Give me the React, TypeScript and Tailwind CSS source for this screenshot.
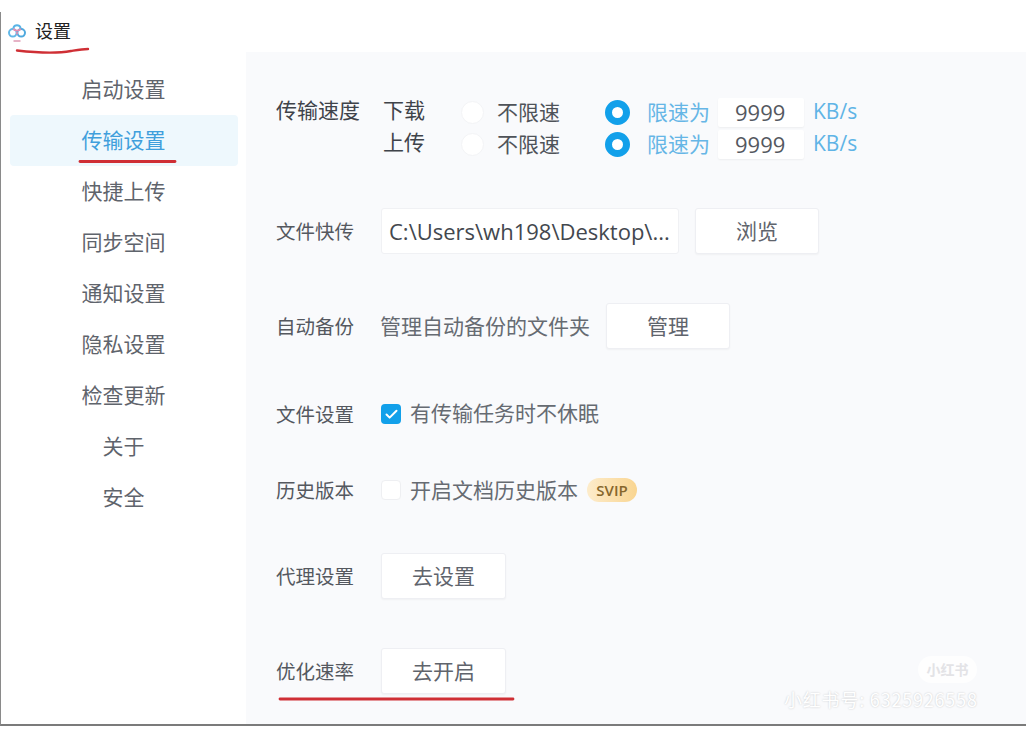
import React from 'react';
import { Check } from 'lucide-react';

const FONT = "font-['Noto_Sans_CJK_SC','Noto_Sans',sans-serif]";

const navItems = ['启动设置', '传输设置', '快捷上传', '同步空间', '通知设置', '隐私设置', '检查更新', '关于', '安全'];

const Logo = () => (
  <svg width="20" height="24" viewBox="0 0 20 24" fill="none">
    <circle cx="4.8" cy="14.8" r="3.8" stroke="#62b8e8" strokeWidth="2" />
    <circle cx="13.2" cy="14.8" r="3.8" stroke="#4fa9de" strokeWidth="2" />
    <path d="M5.3 10a3.9 3.9 0 0 1 7.4 0" stroke="#58b4e6" strokeWidth="2" />
    <path d="M5.4 10.6c1 2.6 6.2 2.6 7.2 0" stroke="#e88db0" strokeWidth="1.8" />
    <path d="M9 14v2.4" stroke="#e88db0" strokeWidth="1.6" />
    <path d="M5.5 23h7" stroke="#d98aa8" strokeWidth="1.3" />
  </svg>
);

const Radio = ({ on }: { on?: boolean }) =>
  on ? (
    <span className="block w-[25px] h-[25px] rounded-full border-[7px] border-[#12a0ea] bg-white" />
  ) : (
    <span className="block w-[23px] h-[23px] rounded-full bg-white border border-[#f3f4f6]" />
  );

const Btn = ({ label, width }: { label: string; width: string }) => (
  <button className={`${width} h-[46px] pb-[2px] bg-white border border-[#eeeff3] rounded-[3px] text-[21px] leading-[40px] text-[#5f646c] shadow-[0_1px_2px_rgba(0,0,0,0.04)]`}>
    {label}
  </button>
);

const Label = ({ text }: { text: string }) => (
  <span className="w-[105px] shrink-0 text-[19.5px] text-[#54585f]">{text}</span>
);

const SpeedRow = ({ label }: { label: string }) => (
  <div className="flex items-center h-[32px]">
    <span className="w-[77px] text-[21px] text-[#3f434a] -translate-y-[3px]">{label}</span>
    <span className="w-[24px] flex justify-center">
      <Radio />
    </span>
    <span className="ml-[13px] w-[108px] text-[21px] text-[#4f5359] -translate-y-[1px]">不限速</span>
    <Radio on />
    <span className="ml-[17px] w-[71px] text-[21px] text-[#66b6e6] -translate-y-[1px]">限速为</span>
    <span className="w-[86px] h-[29px] bg-white rounded-[2px] text-[22px] leading-[29px] text-[#54585f] font-['Open_Sans',sans-serif] pl-[17px] overflow-hidden shadow-[0_1px_2px_rgba(0,0,0,0.05)]">
      9999
    </span>
    <span className="ml-[9px] text-[21px] text-[#5fb4e6] font-['Open_Sans',sans-serif] -translate-y-[1px]">KB/s</span>
  </div>
);

export default function App() {
  return (
    <div className={`relative w-[1026px] h-[742px] bg-white flex flex-col overflow-hidden ${FONT}`}>
      {/* title bar */}
      <div className="mt-[12px] h-[40px] flex items-center pl-[7px] pb-[4px] gap-[7px] border-l border-[#8a8a8a]">
        <Logo />
        <span className="text-[18px] text-[#222]">设置</span>
      </div>

      <div className="flex h-[674px] border-b-2 border-l border-[#7b7b7b] border-l-[#8a8a8a]">
        {/* sidebar */}
        <nav className="w-[245px] shrink-0 pt-[12px] pl-[9px] pr-[8px] flex flex-col">
          {navItems.map((item, i) => (
            <div
              key={item}
              className={`h-[51px] shrink-0 flex items-center justify-center pb-[2px] pr-[1px] text-[21px] rounded-[4px] ${
                i === 1 ? 'bg-[#eef8fd] text-[#3f9fdc]' : 'text-[#5f646c]'
              }`}
            >
              {item}
            </div>
          ))}
        </nav>

        {/* settings panel */}
        <main className="flex-1 bg-[#f9fafc] pl-[30px] pt-[42px] flex flex-col">
          <div className="flex h-[64px]">
            <span className="w-[107px] shrink-0 text-[21px] text-[#3f434a] leading-[32px] -translate-y-[1px]">传输速度</span>
            <div className="flex flex-col mt-[3px]">
              <SpeedRow label="下载" />
              <SpeedRow label="上传" />
            </div>
          </div>

          <div className="flex items-center h-[47px] mt-[49px]">
            <Label text="文件快传" />
            <span className="w-[298px] h-[46px] bg-white border border-[#f0f1f4] rounded-[3px] pl-[7px] text-[22px] leading-[44px] text-[#43474e] font-['Open_Sans',sans-serif] whitespace-nowrap overflow-hidden">
              {'C:\\Users\\wh198\\Desktop\\...'}
            </span>
            <span className="ml-[16px]">
              <Btn label="浏览" width="w-[124px]" />
            </span>
          </div>

          <div className="flex items-center h-[47px] mt-[48px]">
            <Label text="自动备份" />
            <span className="w-[225px] text-[21px] text-[#666b72] -translate-x-[1px]">管理自动备份的文件夹</span>
            <Btn label="管理" width="w-[124px]" />
          </div>

          <div className="flex items-center h-[30px] mt-[50px]">
            <Label text="文件设置" />
            <span className="w-[20px] h-[20px] rounded-[4px] bg-[#12a0ea] flex items-center justify-center">
              <Check size={15} strokeWidth={3.2} color="#fff" />
            </span>
            <span className="ml-[9px] text-[21px] text-[#666b72] -translate-y-[1px]">有传输任务时不休眠</span>
          </div>

          <div className="flex items-center h-[30px] mt-[46px]">
            <Label text="历史版本" />
            <span className="w-[20px] h-[20px] rounded-[4px] bg-white border border-[#eeeff2]" />
            <span className="ml-[9px] text-[21px] text-[#666b72]">开启文档历史版本</span>
            <span className="ml-[9px] w-[50px] h-[24px] rounded-full bg-gradient-to-r from-[#fdeccb] to-[#f9d591] text-[#86662c] text-[15px] font-semibold flex items-center justify-center font-['Open_Sans',sans-serif]">
              SVIP
            </span>
          </div>

          <div className="flex items-center h-[47px] mt-[47px]">
            <Label text="代理设置" />
            <Btn label="去设置" width="w-[125px]" />
          </div>

          <div className="flex items-center h-[47px] mt-[48px]">
            <Label text="优化速率" />
            <Btn label="去开启" width="w-[125px]" />
          </div>
        </main>
      </div>

      {/* hand drawn red marks */}
      <svg className="absolute left-0 top-0 pointer-events-none" width="1026" height="742" fill="none">
        <path d="M17 50.5c18 2 40 3 54 .5 6-1 11-2 17-2" stroke="#cf2f35" strokeWidth="2.4" strokeLinecap="round" />
        <path d="M80 161.5h95" stroke="#cf2f35" strokeWidth="2.8" strokeLinecap="round" />
        <path d="M280 699h233" stroke="#cf2f35" strokeWidth="2.8" strokeLinecap="round" />
      </svg>

      {/* watermark */}
      <div className="absolute left-[918px] top-[656px] w-[59px] h-[27px] rounded-full bg-white/80 flex items-center justify-center text-[14px] font-bold text-[#e3e3e6]">
        小红书
      </div>
      <div className="absolute left-[784px] top-[686px] text-[18px] leading-[26px] text-white tracking-[0.8px] whitespace-nowrap [text-shadow:0_0_2px_rgba(0,0,0,0.22)]">
        小红书号: 6325926558
      </div>
    </div>
  );
}
